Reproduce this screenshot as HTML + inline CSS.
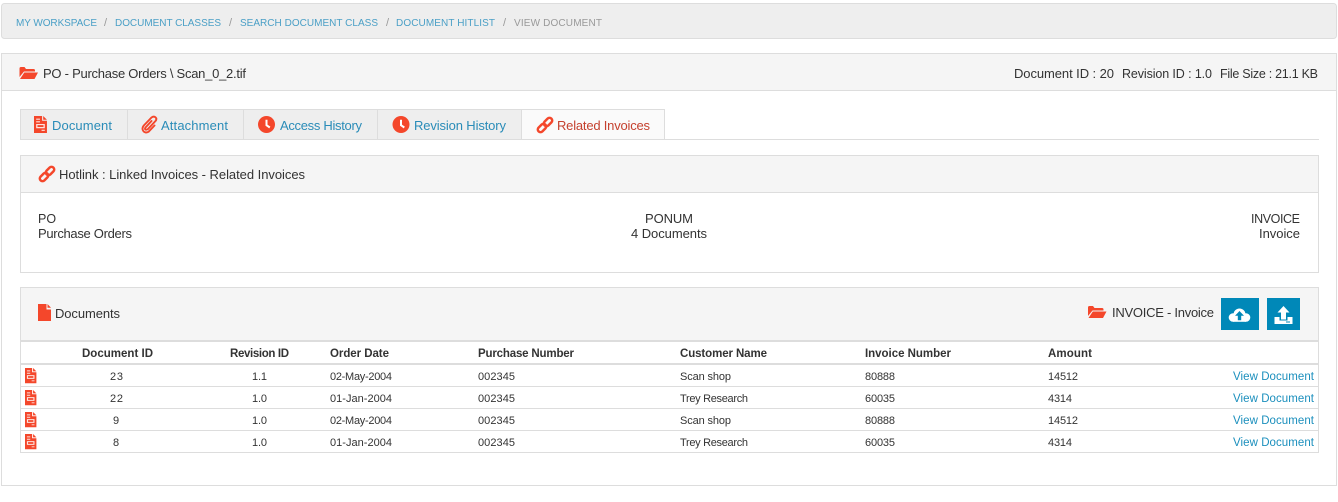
<!DOCTYPE html>
<html><head><meta charset="utf-8"><title>View Document</title>
<style>
html,body{margin:0;padding:0;background:#fff;width:1338px;height:502px;overflow:hidden}
svg{display:block}
text{font-family:"Liberation Sans",sans-serif;font-size:13px;fill:#333}
.s{font-size:12.500px}
.bc{font-size:10px;fill:#4a9fc6}
.sep{font-size:11px;fill:#999}
.tab{fill:#2a8cb8}
.h{font-size:11.500px;font-weight:bold;fill:#333}
.c{font-size:11px;fill:#333}
.l{font-size:11.500px;fill:#1b8fbd}
</style></head><body>
<svg width="1338" height="502" viewBox="0 0 1338 502" xmlns="http://www.w3.org/2000/svg">
<defs>
<g id="ft"><path fill="#f4472b" d="M0 0H7.500V4.500H12V16H0Z"/><path fill="#f4472b" d="M8.500 0L12 3.500H8.500Z"/><path fill="#fff" opacity=".85" d="M2 2.500H5.500V3.500H2ZM2 5H5.500V6H2ZM2 7.500H10V11.500H2ZM3.200 8.600V10.400H8.800V8.600ZM7 13H10V14H7Z"/></g>
<g id="fo"><path fill="#f4472b" d="M0 2.500Q0 1 1.500 1H5L6.500 3H14Q15.500 3 15.500 4.500V5.500H4.500L0 11Z"/><path fill="#f4472b" d="M4.800 6.500H18.500L15 13H0.500Z"/></g>
<g id="ck"><circle cx="8.500" cy="8.500" r="8.500" fill="#f4472b"/><path fill="none" stroke="#fff" stroke-width="2" d="M8.500 3.800V9.200L11.800 11.500"/></g>
<g id="ln"><g fill="none" stroke="#f4472b" stroke-width="2.500"><rect x="-4.800" y="-2.700" width="9.600" height="5.400" rx="2.700" transform="translate(6 12) rotate(-45)"/><rect x="-4.800" y="-2.700" width="9.600" height="5.400" rx="2.700" transform="translate(12 6) rotate(-45)"/></g></g>
</defs>

<!-- breadcrumb -->
<rect x="1.500" y="3.500" width="1335" height="35" rx="3" fill="#eee" stroke="#ddd"/>
<text class="bc" x="16" y="26" textLength="81">MY WORKSPACE</text>
<text class="sep" x="104" y="26">/</text>
<text class="bc" x="115" y="26" textLength="106">DOCUMENT CLASSES</text>
<text class="sep" x="229" y="26">/</text>
<text class="bc" x="240" y="26" textLength="138">SEARCH DOCUMENT CLASS</text>
<text class="sep" x="386" y="26">/</text>
<text class="bc" x="396" y="26" textLength="99">DOCUMENT HITLIST</text>
<text class="sep" x="503" y="26">/</text>
<text class="bc" x="514" y="26" textLength="88" style="fill:#999">VIEW DOCUMENT</text>

<!-- main panel -->
<rect x="1.500" y="53.500" width="1335" height="432" fill="#fff" stroke="#ddd"/>
<rect x="2" y="54" width="1334" height="36" fill="#f5f5f5"/>
<rect x="2" y="90" width="1334" height="1" fill="#ddd"/>
<use href="#fo" x="19.500" y="66"/>
<text x="43" y="78" textLength="203">PO - Purchase Orders \ Scan_0_2.tif</text>
<text x="1014" y="78" textLength="100">Document ID : 20</text>
<text class="s" x="1122" y="78" textLength="90">Revision ID : 1.0</text>
<text class="s" x="1220" y="78" textLength="98">File Size : 21.1 KB</text>

<!-- tabs -->
<rect x="20" y="139" width="1299" height="1" fill="#ddd"/>
<g fill="#eee" stroke="#ddd">
<rect x="20.500" y="109.500" width="107" height="30"/>
<rect x="127.500" y="109.500" width="116" height="30"/>
<rect x="243.500" y="109.500" width="134" height="30"/>
<rect x="377.500" y="109.500" width="144" height="30"/>
</g>
<rect x="521.500" y="109.500" width="143" height="30" fill="#fafafa" stroke="#ddd"/>
<use href="#ft" transform="translate(34 116) scale(1.080 1.060)"/>
<text class="tab" x="52" y="130" textLength="60">Document</text>
<g transform="translate(142,116)" fill="none" stroke="#f4472b" stroke-width="1.900" stroke-linecap="round" stroke-linejoin="round"><path d="M9.500 5L3.500 11.500Q2.500 13 3.500 13.500T6 13L13.500 5Q15.200 2.800 13.500 1.300T9.500 1.500L1.800 9.500Q-.5 12.500 1.300 15T6.500 15.800L12.500 9.500"/></g>
<text class="tab" x="161" y="130" textLength="67">Attachment</text>
<use href="#ck" x="258" y="116"/>
<text class="tab" x="280" y="130" textLength="82">Access History</text>
<use href="#ck" x="392.500" y="116"/>
<text class="tab" x="414" y="130" textLength="92">Revision History</text>
<use href="#ln" x="536" y="116"/>
<text x="557" y="130" textLength="93" style="fill:#c5412f">Related Invoices</text>

<!-- hotlink panel -->
<rect x="20.500" y="155.500" width="1298" height="117" fill="#fff" stroke="#ddd"/>
<rect x="21" y="156" width="1297" height="36" fill="#f5f5f5"/>
<rect x="21" y="192" width="1297" height="1" fill="#ddd"/>
<use href="#ln" x="38" y="165"/>
<text x="59" y="179" textLength="246">Hotlink : Linked Invoices - Related Invoices</text>
<text class="s" x="38" y="223">PO</text>
<text x="38" y="238" textLength="94">Purchase Orders</text>
<text x="645" y="223" textLength="48">PONUM</text>
<text x="631" y="238" textLength="76">4 Documents</text>
<text class="s" x="1251" y="223" textLength="49">INVOICE</text>
<text x="1259" y="238" textLength="41">Invoice</text>

<!-- documents panel -->
<rect x="20.500" y="287.500" width="1298" height="165" fill="#fff" stroke="#ddd"/>
<rect x="21" y="288" width="1297" height="52" fill="#f5f5f5"/>
<rect x="21" y="340" width="1297" height="2" fill="#ddd"/>
<path fill="#f4472b" d="M38 304H46.500V309.500H51V321H38Z"/><path fill="#f4472b" d="M47.500 304L51 307.800H47.500Z"/>
<text x="55" y="318" textLength="65">Documents</text>
<use href="#fo" x="1088" y="305"/>
<text x="1112" y="317" textLength="102">INVOICE - Invoice</text>

<rect x="1221" y="298" width="38" height="32" fill="#0088b8"/>
<g fill="#fff"><circle cx="1233" cy="317.500" r="4.300"/><circle cx="1239.500" cy="314.500" r="6"/><circle cx="1246" cy="317.500" r="4.300"/><rect x="1233" y="316" width="13" height="5.800"/></g>
<path fill="#0088b8" d="M1239.500 311L1244 315.800H1241.200V320.300H1237.800V315.800H1235Z"/>
<rect x="1267" y="298" width="33" height="32" fill="#0088b8"/>
<path fill="#fff" d="M1283.500 306L1289.500 312.500H1286V319.500H1281V312.500H1277.500Z"/>
<path fill="#fff" d="M1274.500 317H1279.500V320.500H1287.500V317H1292.500V324H1274.500Z"/>
<rect x="1286" y="321.500" width="4" height="1" fill="#0088b8"/>

<!-- table -->
<rect x="21" y="363" width="1297" height="2" fill="#ddd"/>
<rect x="21" y="386" width="1297" height="1" fill="#ddd"/>
<rect x="21" y="408" width="1297" height="1" fill="#ddd"/>
<rect x="21" y="430" width="1297" height="1" fill="#ddd"/>
<text class="h" x="82" y="357" textLength="71">Document ID</text>
<text class="h" x="230" y="357" textLength="59">Revision ID</text>
<text class="h" x="330" y="357" textLength="59">Order Date</text>
<text class="h" x="478" y="357" textLength="96">Purchase Number</text>
<text class="h" x="680" y="357" textLength="87">Customer Name</text>
<text class="h" x="865" y="357" textLength="86">Invoice Number</text>
<text class="h" x="1048" y="357" textLength="44">Amount</text>

<use href="#ft" transform="translate(25 368) scale(.95)"/><use href="#ft" transform="translate(25 390) scale(.95)"/><use href="#ft" transform="translate(25 412) scale(.95)"/><use href="#ft" transform="translate(25 434) scale(.95)"/>

<text class="c" x="110" y="380" textLength="13">23</text>
<text class="c" x="252" y="380" textLength="15">1.1</text>
<text class="c" x="330" y="380" textLength="62">02-May-2004</text>
<text class="c" x="478" y="380" textLength="37">002345</text>
<text class="c" x="680" y="380" textLength="51">Scan shop</text>
<text class="c" x="865" y="380" textLength="30">80888</text>
<text class="c" x="1048" y="380" textLength="30">14512</text>
<text class="l" x="1233" y="380" textLength="81">View Document</text>

<text class="c" x="110" y="402" textLength="13">22</text>
<text class="c" x="252" y="402" textLength="15">1.0</text>
<text class="c" x="330" y="402" textLength="62">01-Jan-2004</text>
<text class="c" x="478" y="402" textLength="37">002345</text>
<text class="c" x="680" y="402" textLength="68">Trey Research</text>
<text class="c" x="865" y="402" textLength="30">60035</text>
<text class="c" x="1048" y="402" textLength="24">4314</text>
<text class="l" x="1233" y="402" textLength="81">View Document</text>

<text class="c" x="113" y="424">9</text>
<text class="c" x="252" y="424" textLength="15">1.0</text>
<text class="c" x="330" y="424" textLength="62">02-May-2004</text>
<text class="c" x="478" y="424" textLength="37">002345</text>
<text class="c" x="680" y="424" textLength="51">Scan shop</text>
<text class="c" x="865" y="424" textLength="30">80888</text>
<text class="c" x="1048" y="424" textLength="30">14512</text>
<text class="l" x="1233" y="424" textLength="81">View Document</text>

<text class="c" x="113" y="446">8</text>
<text class="c" x="252" y="446" textLength="15">1.0</text>
<text class="c" x="330" y="446" textLength="62">01-Jan-2004</text>
<text class="c" x="478" y="446" textLength="37">002345</text>
<text class="c" x="680" y="446" textLength="68">Trey Research</text>
<text class="c" x="865" y="446" textLength="30">60035</text>
<text class="c" x="1048" y="446" textLength="24">4314</text>
<text class="l" x="1233" y="446" textLength="81">View Document</text>
</svg>
</body></html>
